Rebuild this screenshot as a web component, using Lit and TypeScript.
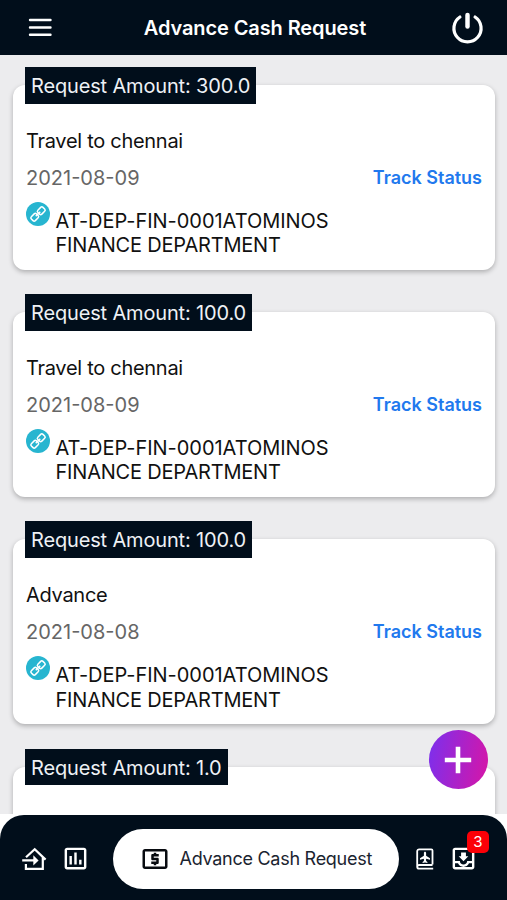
import { LitElement, html, css, svg, nothing } from "lit";
import { customElement, property } from "lit/decorators.js";

interface CashRequest {
  amount: string;
  title: string;
  date: string;
}

const REQUESTS: CashRequest[] = [
  { amount: "300.0", title: "Travel to chennai", date: "2021-08-09" },
  { amount: "100.0", title: "Travel to chennai", date: "2021-08-09" },
  { amount: "100.0", title: "Advance", date: "2021-08-08" },
  { amount: "1.0", title: "", date: "" },
];

@customElement("request-card")
class RequestCard extends LitElement {
  @property({ attribute: false }) item!: CashRequest;

  static styles = css`
    :host { display: block; height: 185px; margin-bottom: 42.2px; }
    .card {
      height: 185px; box-sizing: border-box; background: #fff; border-radius: 12px;
      padding: 0 13px 0 13px; box-shadow: 0 2px 5px rgba(0, 0, 0, 0.27);
      display: flex; flex-direction: column; align-items: stretch;
    }
    .amount {
      align-self: flex-start; margin: -18px 0 0 -1px; height: 36.5px; flex: none; line-height: 38.5px;
      padding: 0 6px; background: #010e1b; color: #eef1f5; font-size: 20px; white-space: nowrap;
      letter-spacing: -0.16px;
    }
    .title { margin-top: 24.5px; height: 24px; line-height: 26px; font-size: 20px; color: #111; letter-spacing: -0.29px; }
    .row { display: flex; justify-content: space-between; margin-top: 13px; height: 24px; line-height: 26px; }
    .date { font-size: 20px; color: #666; }
    .track { font-size: 18px; font-weight: 600; color: #2179ee; margin-right: -0.5px; }
    .dept { display: flex; margin-top: 13px; }
    .link { width: 24px; height: 24px; flex: none; margin-left: -0.5px; }
    .name { margin: 7px 0 0 6px; font-size: 20px; line-height: 24.3px; color: #111; letter-spacing: -0.04px; }
    .second { letter-spacing: -0.2px; }
  `;

  render() {
    const r = this.item;
    return html`<div class="card">
      <div class="amount">Request Amount: ${r.amount}</div>
      ${r.title
        ? html`<div class="title">${r.title}</div>
            <div class="row"><span class="date">${r.date}</span><span class="track">Track Status</span></div>
            <div class="dept">
              <svg class="link" viewBox="0 0 24 24">
                <circle cx="12" cy="12" r="12" fill="#27b5d0" />
                <g transform="rotate(-45 12 12)" fill="none" stroke="#fff" stroke-width="1.5">
                  <rect x="3.8" y="9.2" width="7.2" height="5.6" rx="1.6" />
                  <rect x="13" y="9.2" width="7.2" height="5.6" rx="1.6" />
                  <path d="M8.8 12h6.4" />
                </g>
              </svg>
              <div class="name">AT-DEP-FIN-0001ATOMINOS<br /><span class="second">FINANCE DEPARTMENT</span></div>
            </div>`
        : nothing}
    </div>`;
  }
}

const icon = (cls: string, d: string) => html`<svg class=${cls} viewBox="0 0 24 24" fill="currentColor">${svg`<path d=${d} />`}</svg>`;

@customElement("app-root")
class AppRoot extends LitElement {
  static styles = css`
    :host {
      display: flex; flex-direction: column; position: relative; height: 900px; width: 507px;
      overflow: hidden; background: #fff; font-family: Inter, "Liberation Sans", sans-serif;
    }
    header {
      height: 54.5px; flex: none; box-sizing: border-box; padding: 0 23px 0 28px; background: #010e1b; color: #fff;
      display: flex; align-items: center; justify-content: space-between;
    }
    .menu { width: 24px; height: 20px; }
    h1 { margin: 1px 0 0 7px; font-size: 20px; font-weight: 600; letter-spacing: -0.1px; }
    .power { width: 33px; height: 33px; }
    main { height: 759.5px; flex: none; box-sizing: border-box; overflow: hidden; background: #ececee; padding: 30.5px 12.5px 0 13px; }
    nav {
      height: 85px; flex: none; margin-top: 1px; background: #010e1b; color: #fff; border-radius: 24px 24px 0 0;
      display: flex; align-items: center; box-sizing: border-box; padding: 2px 0 0 21px;
    }
    .home { width: 26px; height: 26px; }
    .chart { width: 29px; height: 29px; margin-left: 14px; }
    .pill {
      width: 286px; height: 60px; margin-left: 23px; border-radius: 30px; background: #fff; color: #1b2430;
      display: flex; align-items: center; box-sizing: border-box; padding-left: 26.5px; font-size: 18px;
      letter-spacing: -0.27px;
    }
    .cash { width: 30px; height: 30px; color: #080b10; margin-right: 10px; }
    .pass { width: 18px; height: 22px; margin-left: 17px; }
    .inboxwrap { position: relative; margin-left: 15px; width: 29px; height: 29px; }
    .inbox { width: 29px; height: 29px; display: block; }
    .badge {
      position: absolute; left: 18px; top: -13px; width: 22px; height: 22px; border-radius: 5px; background: #fb0007;
      font-size: 15px; line-height: 22px; text-align: center;
    }
    .fab {
      position: absolute; left: 428.5px; top: 730px; width: 59px; height: 59px; border-radius: 50%;
      background: linear-gradient(100deg, #7a30ee, #d815a6); display: flex; align-items: center; justify-content: center;
    }
    .plus { width: 28px; height: 28px; }
  `;

  render() {
    return html`
      <header>
        <svg class="menu" viewBox="0 0 24 20" stroke="#fff" stroke-width="2.4" stroke-linecap="round">
          <path d="M2 3h20.500M2 10.500h20.500M2 17.800h20.500" />
        </svg>
        <h1>Advance Cash Request</h1>
        <svg class="power" viewBox="0 0 34 34" fill="none" stroke="#fff" stroke-linecap="round">
          <path d="M9.200 6.200A14 14 0 1 0 24.800 6.200" stroke-width="3.300" />
          <path d="M17 4v12" stroke-width="4.600" />
        </svg>
      </header>
      <main>${REQUESTS.map((r) => html`<request-card .item=${r}></request-card>`)}</main>
      <nav>
        <svg class="home" viewBox="0 0 26 26" fill="none" stroke="#fff" stroke-width="2.200">
          <path d="M5 11.200L13.700 3.200L24.600 13.600M21.800 11.500V22.900H4.900V18M1.200 14.400H14" />
          <path d="M12.300 9.300L17.600 14.400L12.300 19.500z" fill="#fff" stroke="none" />
        </svg>
        ${icon("chart", "M9 17H7V10H9V17M13 17H11V7H13V17M17 17H15V13H17V17M19 19H5V5H19V19.1M19 3H5C3.9 3 3 3.9 3 5V19C3 20.1 3.9 21 5 21H19C20.1 21 21 20.1 21 19V5C21 3.9 20.1 3 19 3Z")}
        <div class="pill">
          ${icon("cash", "M11 17h2v-1h1c.55 0 1-.45 1-1v-3c0-.55-.45-1-1-1h-3v-1h4V8h-2V7h-2v1h-1c-.55 0-1 .45-1 1v3c0 .55.45 1 1 1h3v1H9v2h2v1zm9-13H4c-1.11 0-1.99.89-1.99 2L2 18c0 1.11.89 2 2 2h16c1.11 0 2-.89 2-2V6c0-1.11-.89-2-2-2zm0 14H4V6h16v12z")}
          <span class="label">Advance Cash Request</span>
        </div>
        <svg class="pass" viewBox="0 0 18 22" fill="none" stroke="#fff" stroke-width="1.800">
          <path d="M16.500 16.500V2.500a1.200 1.200 0 0 0-1.200-1.200H3.200a2 2 0 0 0-2 2v15.400a2 2 0 0 0 2 2h14M16.500 17H3.200a2 2 0 0 0-2 1.700" />
          <path d="M9 3.800c.7 0 1.100.6 1.100 1.300V7.700l3.900 2.500v1.500l-3.900-1v2.200l1.300 1v1.100l-2.400-.6-2.400.6v-1.100l1.300-1v-2.200l-3.900 1v-1.500l3.900-2.500V5.100c0-.7.4-1.300 1.100-1.300z" fill="#fff" stroke="none" />
        </svg>
        <div class="inboxwrap">
          <svg class="inbox" viewBox="0 0 24 24" fill="#fff">
            <path d="M16 10.200H14V7H10V10.200H8L12 14.200L16 10.200M19 3H5C3.900 3 3 3.900 3 5V19C3 20.100 3.900 21 5 21H19C20.100 21 21 20.100 21 19V5C21 3.900 20.100 3 19 3M19 5V14H15C15 15.650 13.650 17 12 17S9 15.650 9 14H5V5H19M5 19V16H7.420C8.260 17.800 10 19 12 19S15.740 17.800 16.580 16H19V19H5Z" />
          </svg>
          <span class="badge">3</span>
        </div>
      </nav>
      <div class="fab">
        <svg class="plus" viewBox="0 0 28 28" stroke="#fff" stroke-width="4.600"><path d="M14 .8v26.400M.8 14h26.400" /></svg>
      </div>
    `;
  }
}
